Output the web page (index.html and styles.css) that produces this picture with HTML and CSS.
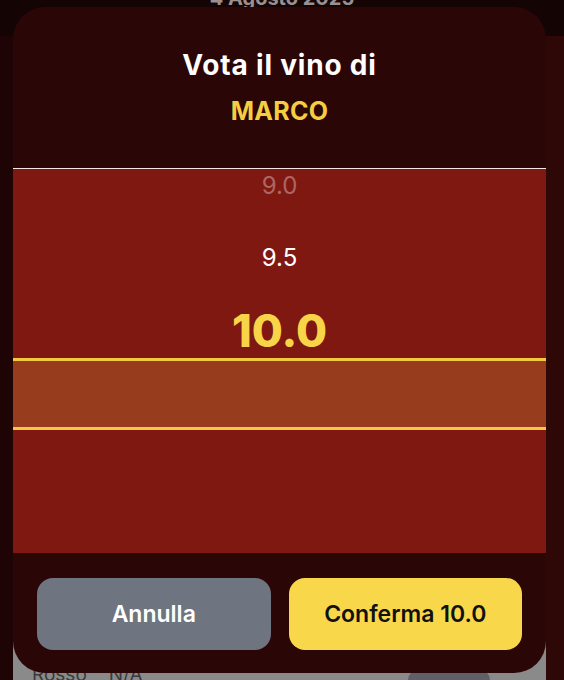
FILE: index.html
```html
<!DOCTYPE html>
<html lang="it">
<head>
<meta charset="utf-8">
<link rel="stylesheet" href="styles.css">
</head>
<body>
<div class="page">
  <div class="date">4 Agosto 2025</div>
  <div class="under">
    <div class="under-left"></div>
    <div class="under-mid">
      <div class="wine-row">
        <span class="wine-type">Rosso</span>
        <span class="wine-val">N/A</span>
        <span class="wine-pill"></span>
      </div>
    </div>
    <div class="under-right"></div>
  </div>

  <div class="modal">
    <div class="modal-head">
      <div class="title">Vota il vino di</div>
      <div class="name">MARCO</div>
    </div>
    <div class="picker">
      <div class="list">
        <div class="item item-far">9.0</div>
        <div class="item item-near">9.5</div>
        <div class="item item-sel">10.0</div>
        <div class="item"></div>
        <div class="item"></div>
      </div>
      <div class="band"></div>
    </div>
    <div class="modal-foot">
      <button class="btn btn-cancel">Annulla</button>
      <button class="btn btn-ok">Conferma 10.0</button>
    </div>
  </div>
</div>
</body>
</html>
```

FILE: styles.css
```css
* { box-sizing: border-box; }
html, body {
  margin: 0;
  padding: 0;
  width: 564px;
  height: 680px;
  overflow: hidden;
  background: #150404;
  font-family: Inter, "Noto Sans", sans-serif;
}
.page {
  position: relative;
  width: 564px;
  height: 680px;
  display: flex;
  flex-direction: column;
}
.date {
  height: 50px;
  margin-top: -14px;
  text-align: center;
  color: #9a9090;
  font-weight: 700;
  font-size: 20px;
  line-height: 24px;
}
.under {
  flex: 1;
  display: flex;
}
.under-left {
  width: 13px;
  background: #1e0404;
}
.under-mid {
  flex: 1;
  background: #200505;
  display: flex;
  flex-direction: column;
  justify-content: flex-end;
}
.under-right {
  width: 18px;
  background: #2e0807;
}
.wine-row {
  height: 44px;
  background: #8a8a8a;
  display: flex;
  align-items: flex-end;
  padding: 0 0 0 19px;
  color: #3a3a3a;
  font-size: 19px;
  line-height: 22px;
  gap: 22px;
}
.wine-type, .wine-val { margin-bottom: -6px; }
.wine-pill {
  margin-left: auto;
  margin-right: 56px;
  width: 82px;
  height: 10px;
  border-radius: 16px 16px 0 0;
  background: #5f5f66;
}
.modal {
  position: absolute;
  left: 13px;
  top: 7px;
  width: 533px;
  height: 666px;
  border-radius: 32px;
  background: #2b0606;
  overflow: hidden;
  display: flex;
  flex-direction: column;
}
.modal-head {
  height: 162px;
  border-bottom: 1px solid #f3e6e4;
  padding-top: 41px;
  display: flex;
  flex-direction: column;
  align-items: center;
}
.title {
  color: #ffffff;
  font-weight: 700;
  font-size: 28px;
  line-height: 34px;
  letter-spacing: 0.8px;
}
.name {
  margin-top: 14px;
  color: #f5cd40;
  font-weight: 700;
  font-size: 25px;
  line-height: 30px;
  letter-spacing: 0.3px;
}
.picker {
  position: relative;
  flex: 1;
  background: #801812;
  overflow: hidden;
}
.list {
  margin-top: -20px;
  display: flex;
  flex-direction: column;
}
.item {
  height: 72px;
  display: flex;
  align-items: center;
  justify-content: center;
}
.item-far {
  color: rgba(255, 255, 255, 0.35);
  font-size: 24px;
}
.item-near {
  color: #ffffff;
  font-size: 24px;
}
.item-sel {
  color: #f8d448;
  font-weight: 800;
  font-size: 45px;
  padding-top: 2px;
}
.band {
  position: absolute;
  left: 0;
  right: 0;
  top: 189px;
  height: 72px;
  background: #983c1e;
  border-top: 3px solid #f5c842;
  border-bottom: 3px solid #f5c842;
}
.modal-foot {
  height: 120px;
  padding: 25px 24px 0;
  display: flex;
  gap: 18px;
}
.btn {
  flex: 1;
  height: 72px;
  border: none;
  border-radius: 16px;
  font-family: Inter, "Noto Sans", sans-serif;
  font-weight: 600;
  font-size: 23px;
}
.btn-cancel {
  background: #6e7480;
  color: #ffffff;
}
.btn-ok {
  background: #f8d84a;
  color: #111111;
}
```
